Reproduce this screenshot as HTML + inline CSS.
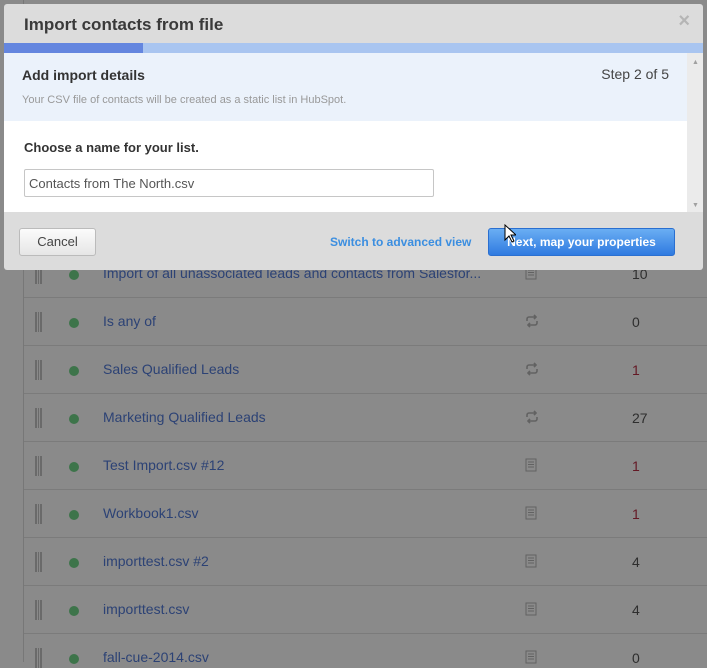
<!DOCTYPE html>
<html><head><meta charset="utf-8"><style>
*{margin:0;padding:0;box-sizing:border-box}
body{width:707px;height:662px;overflow:hidden;background:#8a8a8a;font-family:"Liberation Sans",Arial,sans-serif;position:relative}
.vl{position:absolute;left:23px;top:0;width:1px;height:662px;background:#777}
.sep{position:absolute;left:24px;right:0;height:1px;background:#7b7b7b}
.row{position:absolute;left:0;right:0;height:20px;font-size:14px}
.grip{position:absolute;left:35px;top:0;width:7px;height:20px;border-left:2px solid #6a6a6a;border-right:2px solid #6a6a6a}
.grip:after{content:"";position:absolute;left:1px;top:0;width:1px;height:20px;background:#6a6a6a}
.dot{position:absolute;left:69px;top:6px;width:10px;height:10px;border-radius:50%;background:#3d744a}
.name{position:absolute;left:103px;top:1px;color:#2c4275;white-space:nowrap}
.ic{position:absolute;left:525px;top:2px}
.cnt{position:absolute;left:632px;top:2px;color:#2e2e2e}
.red{color:#641824}
.modal{position:absolute;left:4px;top:4px;width:699px;height:266px;background:#dcdcdc;border-radius:3px;overflow:hidden}
</style></head><body>
<div class="vl"></div>
<div class="sep" style="top:297px"></div><div class="sep" style="top:345px"></div><div class="sep" style="top:393px"></div><div class="sep" style="top:441px"></div><div class="sep" style="top:489px"></div><div class="sep" style="top:537px"></div><div class="sep" style="top:585px"></div><div class="sep" style="top:633px"></div>

<svg width="0" height="0" style="position:absolute"><defs>
<symbol id="doc" viewBox="0 0 12 14"><rect x="1" y="1" width="10" height="12" fill="none" stroke="#626262" stroke-width="1"/><path d="M3 4h6M3 6.5h6M3 9h6" stroke="#626262"/></symbol>
<symbol id="sync" viewBox="0 0 14 14"><path d="M2 7V5a2 2 0 0 1 2-2h7M9 1l2 2-2 2M12 7v2a2 2 0 0 1-2 2H3M5 9l-2 2 2 2" fill="none" stroke="#626262" stroke-width="1.6"/></symbol>
</defs></svg>

<div class="row" style="top:264px"><div class="grip"></div><div class="dot"></div><div class="name">Import of all unassociated leads and contacts from Salesfor...</div><svg class="ic" width="12" height="14"><use href="#doc"/></svg><div class="cnt">10</div></div>
<div class="row" style="top:312px"><div class="grip"></div><div class="dot"></div><div class="name">Is any of</div><svg class="ic" width="14" height="14"><use href="#sync"/></svg><div class="cnt">0</div></div>
<div class="row" style="top:360px"><div class="grip"></div><div class="dot"></div><div class="name">Sales Qualified Leads</div><svg class="ic" width="14" height="14"><use href="#sync"/></svg><div class="cnt red">1</div></div>
<div class="row" style="top:408px"><div class="grip"></div><div class="dot"></div><div class="name">Marketing Qualified Leads</div><svg class="ic" width="14" height="14"><use href="#sync"/></svg><div class="cnt">27</div></div>
<div class="row" style="top:456px"><div class="grip"></div><div class="dot"></div><div class="name">Test Import.csv #12</div><svg class="ic" width="12" height="14"><use href="#doc"/></svg><div class="cnt red">1</div></div>
<div class="row" style="top:504px"><div class="grip"></div><div class="dot"></div><div class="name">Workbook1.csv</div><svg class="ic" width="12" height="14"><use href="#doc"/></svg><div class="cnt red">1</div></div>
<div class="row" style="top:552px"><div class="grip"></div><div class="dot"></div><div class="name">importtest.csv #2</div><svg class="ic" width="12" height="14"><use href="#doc"/></svg><div class="cnt">4</div></div>
<div class="row" style="top:600px"><div class="grip"></div><div class="dot"></div><div class="name">importtest.csv</div><svg class="ic" width="12" height="14"><use href="#doc"/></svg><div class="cnt">4</div></div>
<div class="row" style="top:648px"><div class="grip"></div><div class="dot"></div><div class="name">fall-cue-2014.csv</div><svg class="ic" width="12" height="14"><use href="#doc"/></svg><div class="cnt">0</div></div>

<div class="modal">
 <div style="position:absolute;left:20px;top:11px;font-size:17px;font-weight:bold;color:#3a3a3a">Import contacts from file</div>
 <div style="position:absolute;right:13px;top:6px;font-size:20px;font-weight:bold;color:#b5b5b5">×</div>
 <div style="position:absolute;left:0;top:39px;width:699px;height:10px;background:#a9c5f0"></div>
 <div style="position:absolute;left:0;top:39px;width:139px;height:10px;background:#6486df"></div>
 <div style="position:absolute;left:0;top:49px;width:683px;height:68px;background:#ebf2fb"></div>
 <div style="position:absolute;left:0;top:117px;width:683px;height:91px;background:#fff"></div>
 <div style="position:absolute;left:683px;top:49px;width:16px;height:159px;background:#ebebeb"></div>
 <div style="position:absolute;left:688px;top:55px;font-size:7px;color:#a0a0a0">▲</div>
 <div style="position:absolute;left:688px;top:198px;font-size:7px;color:#a0a0a0">▼</div>
 <div style="position:absolute;left:18px;top:63px;font-size:14px;font-weight:bold;color:#333">Add import details</div>
 <div style="position:absolute;right:34px;top:62px;font-size:14px;color:#444">Step 2 of 5</div>
 <div style="position:absolute;left:18px;top:90px;font-size:11px;color:#999">Your CSV file of contacts will be created as a static list in HubSpot.</div>
 <div style="position:absolute;left:20px;top:136px;font-size:13px;font-weight:bold;color:#333">Choose a name for your list.</div>
 <div style="position:absolute;left:20px;top:165px;width:410px;height:28px;border:1px solid #c6c6c6;border-radius:2px;background:#fff;font-size:13px;color:#555;padding:6px 4px">Contacts from The North.csv</div>
 <div style="position:absolute;left:15px;top:224px;width:77px;height:28px;border:1px solid #bbb;border-radius:3px;background:linear-gradient(#fbfbfb,#e6e6e6);font-size:13px;color:#444;text-align:center;line-height:26px">Cancel</div>
 <div style="position:absolute;left:326px;top:231px;font-size:12px;font-weight:bold;color:#3b8ee0">Switch to advanced view</div>
 <div style="position:absolute;left:484px;top:224px;width:187px;height:28px;border:1px solid #2a6fd0;border-radius:3px;background:linear-gradient(#6aaef3,#2f7ae0);font-size:12px;font-weight:bold;color:#fff;text-align:center;line-height:26px">Next, map your properties</div>
</div>
<svg style="position:absolute;left:504px;top:224px" width="12" height="20" viewBox="0 0 12 20"><path d="M1 1v15l4-4 3 6 2-1-3-6h5z" fill="#fff" stroke="#000" stroke-width="1"/></svg>
</body></html>
